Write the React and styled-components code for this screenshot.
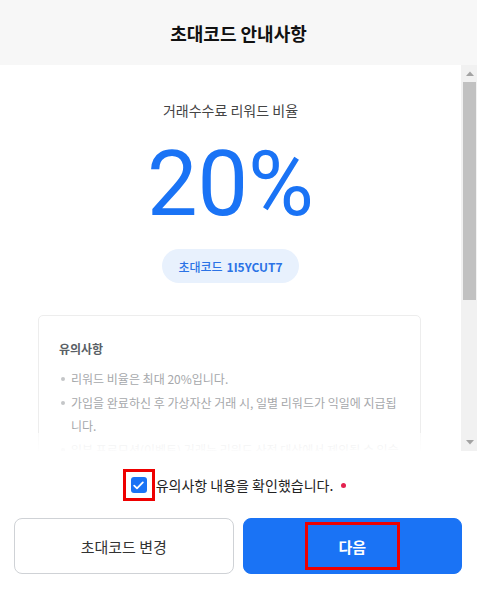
import React from 'react';
import styled, { createGlobalStyle } from 'styled-components';

const GlobalStyle = createGlobalStyle`
  html, body {
    margin: 0;
    height: 100%;
    background: #ffffff;
    font-family: "Noto Sans CJK KR", "Noto Sans", sans-serif;
  }
  #root {
    height: 100%;
  }
`;

const Modal = styled.div`
  height: 100vh;
  display: flex;
  flex-direction: column;
  background: #ffffff;
  overflow: hidden;
`;

const Header = styled.div`
  flex: 0 0 65px;
  display: flex;
  justify-content: center;
  align-items: center;
  background: #f7f7f7;
  font-size: 18px;
  font-weight: 700;
  color: #111;
`;

const ScrollArea = styled.div`
  position: relative;
  flex: 0 0 auto;
  height: 386px;
  display: flex;
`;

const Viewport = styled.div`
  flex: 1;
  min-width: 0;
  overflow: hidden;
`;

const ScrollBar = styled.div`
  flex: 0 0 16px;
  display: flex;
  flex-direction: column;
  background: #f1f1f1;
`;

const ArrowButton = styled.div`
  flex: 0 0 17px;
  display: flex;
  justify-content: center;
  align-items: center;
  padding-left: 1px;
`;

const Track = styled.div`
  flex: 1;
  padding: 0 1px 0 2px;
`;

const Thumb = styled.div`
  height: 218px;
  background: #c1c1c1;
`;

const Fade = styled.div`
  position: absolute;
  left: 0;
  right: 16px;
  bottom: 0;
  height: 18px;
  background: linear-gradient(rgba(255, 255, 255, 0.7), rgba(255, 255, 255, 0.95));
  pointer-events: none;
`;

const Hero = styled.div`
  display: flex;
  flex-direction: column;
  align-items: center;
  padding-top: 35px;
`;

const Caption = styled.div`
  font-size: 14px;
  line-height: 20px;
  color: #444;
`;

const Rate = styled.div`
  margin-top: 21px;
  font-family: Roboto, "Liberation Sans", sans-serif;
  font-size: 90px;
  line-height: 88px;
  color: #1a73f5;
`;

const CodePill = styled.div`
  margin-top: 20px;
  height: 34px;
  padding: 0 16px;
  display: inline-flex;
  align-items: center;
  gap: 4px;
  border-radius: 17px;
  background: #e8f1fd;
  color: #2b73e6;
  font-size: 12px;
  font-weight: 500;

  b {
    font-weight: 700;
  }
`;

const NoticeBox = styled.div`
  margin: 32px 40px 0 38px;
  padding: 23px 20px 24px;
  border: 1px solid #ededed;
  border-radius: 5px;
`;

const NoticeTitle = styled.div`
  font-size: 12px;
  line-height: 20px;
  font-weight: 700;
  color: #5a5f66;
`;

const BulletList = styled.ul`
  margin: 8px 0 0;
  padding: 0;
  list-style: none;
`;

const Bullet = styled.li`
  position: relative;
  padding-left: 12px;
  margin-top: 1px;
  font-size: 12px;
  line-height: 23px;
  color: #a6a8ab;

  &::before {
    content: "";
    position: absolute;
    left: 2px;
    top: 10px;
    width: 4px;
    height: 4px;
    border-radius: 50%;
    background: #c4c6c8;
  }
`;

const Footer = styled.div`
  flex: 0 0 auto;
  display: flex;
  flex-direction: column;
  padding: 18px 15px 15px 14px;
  gap: 17px;
`;

const CheckRow = styled.label`
  display: flex;
  justify-content: center;
  align-items: center;
  height: 32px;
  padding-right: 7px;
  font-size: 14px;
  color: #222;
`;

const Highlight = styled.span`
  box-sizing: border-box;
  display: inline-flex;
  justify-content: center;
  align-items: center;
  border: 3px solid #ee0000;
  width: ${p => p.$w}px;
  height: ${p => p.$h}px;
`;

const CheckBox = styled.span`
  width: 16px;
  height: 16px;
  border-radius: 3px;
  background: #1a73f5;
  display: flex;
  justify-content: center;
  align-items: center;
`;

const CheckLabel = styled.span`
  margin-left: 1px;
`;

const RequiredDot = styled.span`
  width: 5px;
  height: 5px;
  margin-left: 8px;
  border-radius: 50%;
  background: #e3224f;
`;

const ButtonRow = styled.div`
  display: flex;
  gap: 9px;
`;

const Button = styled.button`
  flex: 1;
  height: 56px;
  display: flex;
  justify-content: center;
  align-items: center;
  border-radius: 8px;
  font-family: inherit;
  font-size: 15px;
  cursor: pointer;
  border: 1px solid ${p => (p.$primary ? '#1a73f5' : '#cfd2d6')};
  background: ${p => (p.$primary ? '#1a73f5' : '#ffffff')};
  color: ${p => (p.$primary ? '#ffffff' : '#333')};
  font-weight: ${p => (p.$primary ? 700 : 400)};
`;

const notices = [
  '리워드 비율은 최대 20%입니다.',
  '가입을 완료하신 후 가상자산 거래 시, 일별 리워드가 익일에 지급됩니다.',
  '일부 프로모션(이벤트) 거래는 리워드 산정 대상에서 제외될 수 있습니다.',
  '초대코드는 가입 시 1회만 입력할 수 있으며, 가입 후에는 변경할 수 없습니다.',
];

const Arrow = ({ down }) => (
  <svg width="8" height="5" viewBox="0 0 8 5">
    <path d={down ? 'M0 0 H8 L4 4.5 Z' : 'M0 5 H8 L4 0.5 Z'} fill="#a3a3a3" />
  </svg>
);

const App = () => {
  return (
    <>
      <GlobalStyle />
      <Modal>
        <Header>초대코드 안내사항</Header>
        <ScrollArea>
          <Viewport>
            <Hero>
              <Caption>거래수수료 리워드 비율</Caption>
              <Rate>20%</Rate>
              <CodePill>
                초대코드 <b>1I5YCUT7</b>
              </CodePill>
            </Hero>
            <NoticeBox>
              <NoticeTitle>유의사항</NoticeTitle>
              <BulletList>
                {notices.map(text => (
                  <Bullet key={text}>{text}</Bullet>
                ))}
              </BulletList>
            </NoticeBox>
          </Viewport>
          <ScrollBar>
            <ArrowButton>
              <Arrow />
            </ArrowButton>
            <Track>
              <Thumb />
            </Track>
            <ArrowButton>
              <Arrow down />
            </ArrowButton>
          </ScrollBar>
          <Fade />
        </ScrollArea>
        <Footer>
          <CheckRow>
            <Highlight $w={32} $h={32}>
              <CheckBox>
                <svg width="11" height="9" viewBox="0 0 11 9">
                  <path d="M1.2 4.6 L4 7.3 L9.8 1.4" fill="none" stroke="#fff" strokeWidth="1.8" strokeLinecap="round" strokeLinejoin="round" />
                </svg>
              </CheckBox>
            </Highlight>
            <CheckLabel>유의사항 내용을 확인했습니다.</CheckLabel>
            <RequiredDot />
          </CheckRow>
          <ButtonRow>
            <Button>초대코드 변경</Button>
            <Button $primary>
              <Highlight $w={95} $h={48}>다음</Highlight>
            </Button>
          </ButtonRow>
        </Footer>
      </Modal>
    </>
  );
};

export default App;
